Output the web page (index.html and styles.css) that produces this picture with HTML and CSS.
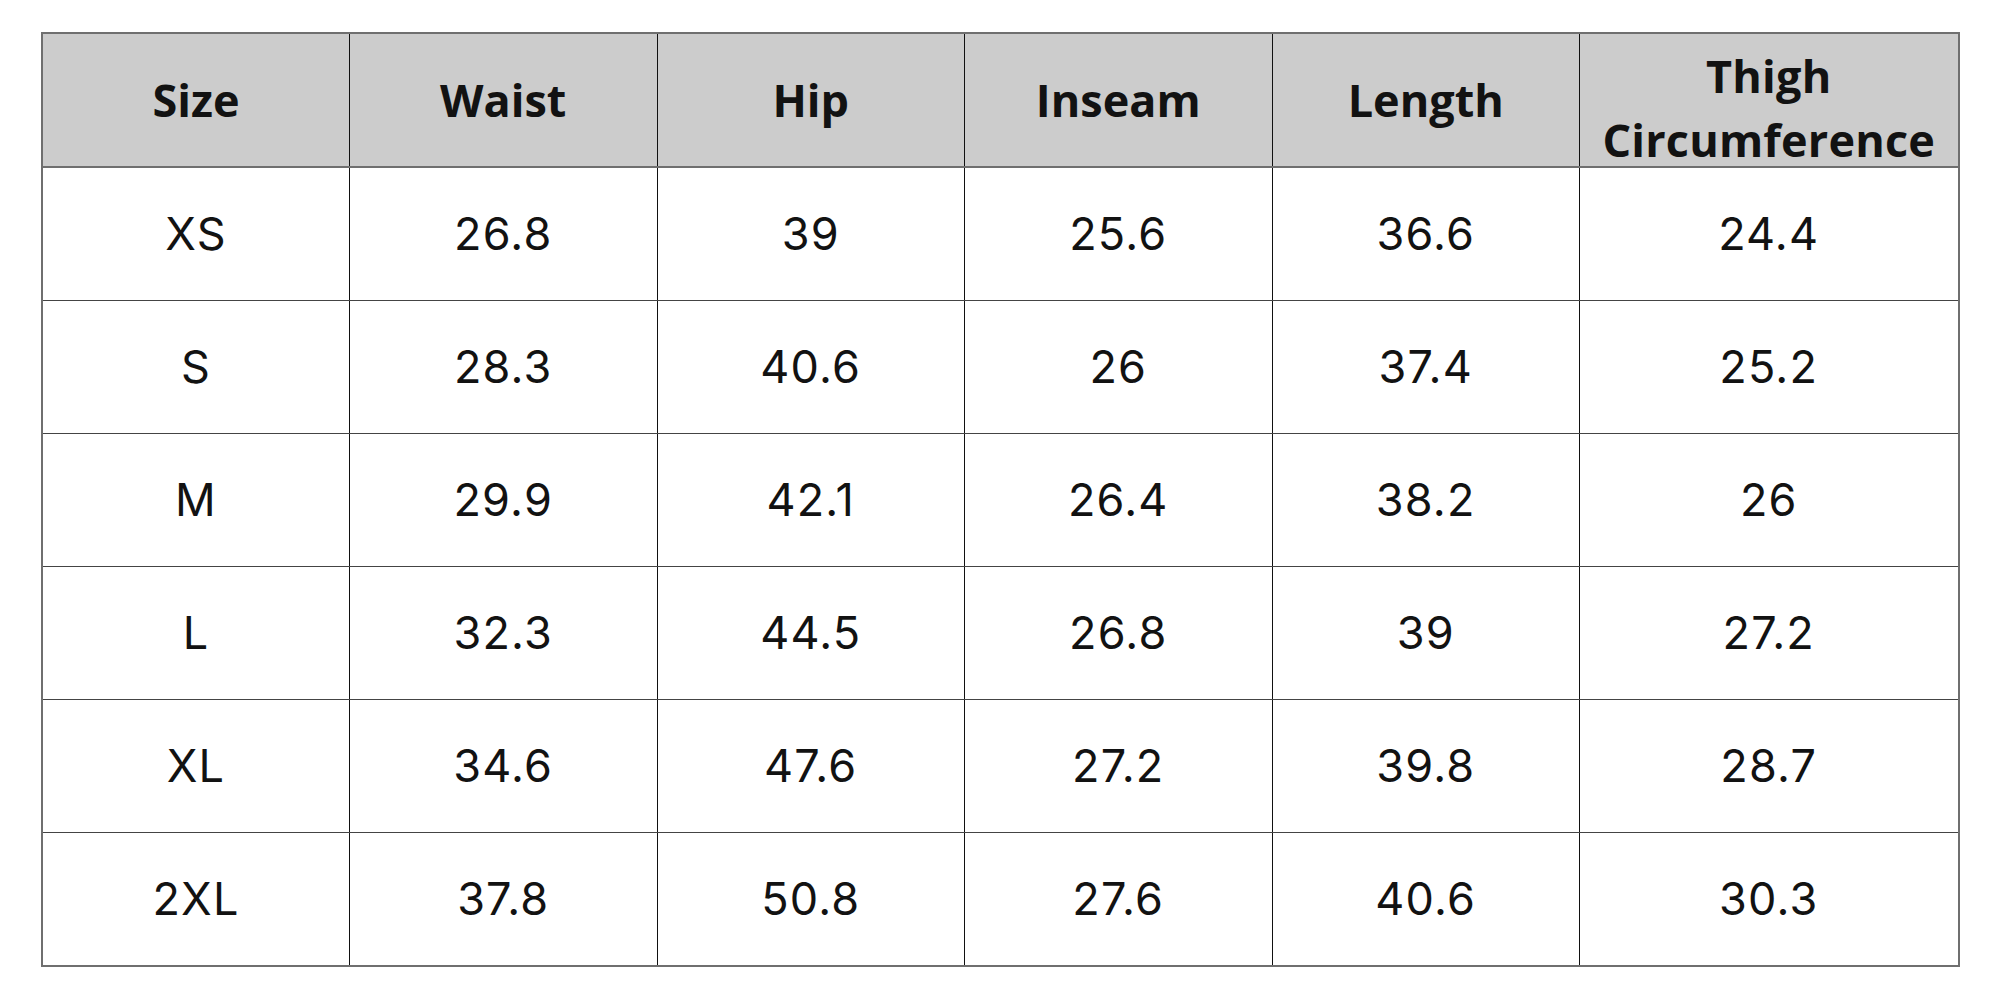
FILE: index.html
```html
<!DOCTYPE html>
<html>
<head>
<meta charset="utf-8">
<link rel="stylesheet" href="styles.css">
</head>
<body>
<div class="page">
<table class="chart">
<colgroup>
<col class="c"><col class="c"><col class="c"><col class="c"><col class="c"><col class="wide">
</colgroup>
<thead>
<tr><th>Size</th><th>Waist</th><th>Hip</th><th>Inseam</th><th>Length</th><th><span class="two">Thigh<br>Circumference</span></th></tr>
</thead>
<tbody>
<tr><td>XS</td><td>26.8</td><td>39</td><td>25.6</td><td>36.6</td><td>24.4</td></tr>
<tr><td>S</td><td>28.3</td><td>40.6</td><td>26</td><td>37.4</td><td>25.2</td></tr>
<tr><td>M</td><td>29.9</td><td>42.1</td><td>26.4</td><td>38.2</td><td>26</td></tr>
<tr><td>L</td><td>32.3</td><td>44.5</td><td>26.8</td><td>39</td><td>27.2</td></tr>
<tr><td>XL</td><td>34.6</td><td>47.6</td><td>27.2</td><td>39.8</td><td>28.7</td></tr>
<tr><td>2XL</td><td>37.8</td><td>50.8</td><td>27.6</td><td>40.6</td><td>30.3</td></tr>
</tbody>
</table>
</div>
</body>
</html>
```

FILE: styles.css
```css
html, body {
  margin: 0;
  padding: 0;
  background: #ffffff;
}
.page {
  padding: 32px 0 0 41px;
}
.chart {
  border-collapse: collapse;
  table-layout: fixed;
  width: 1918px;
  border: 2px solid #6f6f6f;
  font-family: "Inter", "Open Sans", "Liberation Sans", sans-serif;
  color: #121212;
}
.chart col.c { width: 307.5px; }
.chart col.wide { width: 379px; }
.chart th, .chart td {
  border-left: 1px solid #111;
  border-right: 1px solid #111;
  border-top: 1px solid #444;
  border-bottom: 1px solid #444;
  text-align: center;
  vertical-align: middle;
  padding: 0;
  height: 132px;
  font-size: 45px;
  line-height: 64px;
}
.chart thead th {
  background: #cccccc;
  font-family: "Open Sans", "Liberation Sans", sans-serif;
  font-weight: 700;
  border-bottom: 2px solid #6f6f6f;
}
.chart thead th .two {
  display: block;
  line-height: 64px;
  margin-top: 8px;
  margin-bottom: -8px;
  letter-spacing: 0.2px;
}
.chart th:first-child, .chart td:first-child { border-left: 2px solid #6f6f6f; }
.chart th:last-child, .chart td:last-child { border-right: 2px solid #6f6f6f; }
.chart td {
  font-weight: 400;
  letter-spacing: 1.2px;
}
```
